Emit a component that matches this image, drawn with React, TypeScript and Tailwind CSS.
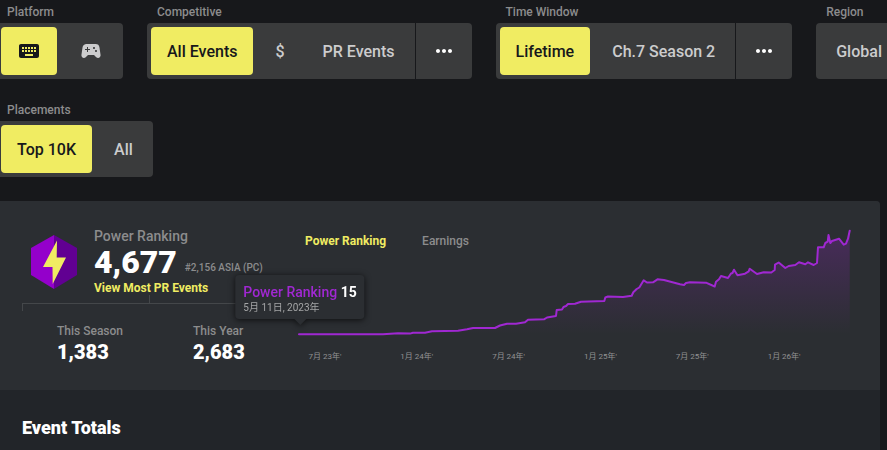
import { useState } from "react";
import type { ReactNode } from "react";
import { MdKeyboard, MdMoreHoriz, MdSportsEsports } from "react-icons/md";

interface Option {
  id: string;
  label: string;
  icon?: ReactNode;
}

const PLATFORMS: Option[] = [
  { id: "kbm", label: "Keyboard", icon: <MdKeyboard size={24} /> },
  { id: "pad", label: "Controller", icon: <MdSportsEsports size={24} /> },
];

const COMPETITIVE: Option[] = [
  { id: "all", label: "All Events" },
  { id: "cash", label: "$" },
  { id: "pr", label: "PR Events" },
];

const WINDOWS: Option[] = [
  { id: "lifetime", label: "Lifetime" },
  { id: "c7s2", label: "Ch.7 Season 2" },
];

const REGIONS: Option[] = [{ id: "global", label: "Global" }];

const PLACEMENTS: Option[] = [
  { id: "10k", label: "Top 10K" },
  { id: "all", label: "All" },
];

const MONTHS = ["7月 23年'", "1月 24年'", "7月 24年'", "1月 25年'", "7月 25年'", "1月 26年'"];

// x,y pairs of the ranking history, in viewBox units
const HISTORY =
  "299,334.3 383,334.3 398,333.2 410,333.6 413,332.8 425,332.8 432,331.3 458,330.8 467,329.3 473,328 495,328 " +
  "500,325.5 507,323.7 516,323.7 525,322.3 528,319.7 544,319.3 547,317.5 556,316 556.7,310 562,309.5 563.5,307 " +
  "566,306 568,304 575,303.7 581,301.7 604.3,301 605.3,297.5 608,296.5 623,297 631.7,295.7 633.3,292.3 636.7,289 " +
  "639.3,287.5 643.7,280.3 647,282.5 653,282.3 657.5,279.3 664,280 680,284.3 684,285 686,283 690,282.3 706,282.7 " +
  "714.7,286.5 716,281.7 719,279.3 721,276 728,278 731,273.5 732.5,273 734,269.7 737.5,275.3 745,273.7 748.7,271.3 " +
  "749.7,268.7 757,274 763.7,272.3 771.3,272.5 774.7,270 775,264.7 778.7,262.5 785.3,268 788.7,266 795.3,265 " +
  "799,262.3 805.3,264.3 808,262.3 813.7,265 817,263 818,247.3 823.7,247.3 825.3,243 827.7,241.7 828.5,235 " +
  "830.3,243 832,241 839,238.7 843.7,244.7 846,243.7 848,238.7 849.7,230.7";

function FilterGroup({
  label,
  options,
  initial,
  more = false,
}: {
  label: string;
  options: Option[];
  initial?: string;
  more?: boolean;
}) {
  const [value, setValue] = useState(initial);

  return (
    <div role="group" aria-label={label} className="shrink-0">
      <div className="px-2.5 pb-1 text-xs leading-[14px] font-medium text-[#8c8c8d]">{label}</div>
      <div className="flex h-14 overflow-hidden rounded bg-[#3a3b3c]">
        <div className="flex gap-1.5 p-1">
          {options.map((o) => {
            const active = o.id === value;
            return (
              <button
                key={o.id}
                type="button"
                aria-pressed={active}
                aria-label={o.icon ? o.label : undefined}
                onClick={() => setValue(o.id)}
                className={`cursor-pointer whitespace-nowrap rounded px-4 text-base font-medium ${
                  active ? "bg-[#f0ec62] text-[#17181b]" : "text-[#cccccd]"
                }`}
              >
                {o.icon ?? <span className="block pt-0.5">{o.label}</span>}
              </button>
            );
          })}
        </div>
        {more && (
          <button
            type="button"
            aria-label={`More ${label} options`}
            className="flex w-[57px] cursor-pointer items-center justify-center border-l border-[#17181b] text-white"
          >
            <MdMoreHoriz size={24} />
          </button>
        )}
      </div>
    </div>
  );
}

function RankBadge() {
  return (
    <svg width="46" height="54" viewBox="0 0 46 54" aria-hidden="true">
      <path d="M23 0L0 13v27l23 14z" fill="#9400cb" />
      <path d="M23 0l23 13v27L23 54z" fill="#610092" />
      <path d="M26 5.500L12 32h9.500L21.700 49 35 22.500h-9.300z" fill="#f0ec62" />
    </svg>
  );
}

function Stat({ label, value }: { label: string; value: string }) {
  return (
    <div>
      <div className="text-xs leading-4 font-medium text-[#8c8c8d]">{label}</div>
      <div className="text-xl leading-[26px] font-black text-white">{value}</div>
    </div>
  );
}

function Summary() {
  return (
    <div className="w-[254px] shrink-0">
      <div className="flex items-center gap-[17px] pl-[9px]">
        <RankBadge />
        <div className="whitespace-nowrap">
          <div className="text-sm leading-4 font-medium text-[#8c8c8d]">Power Ranking</div>
          <div className="flex items-end gap-2">
            <span className="text-[32px] leading-[37px] font-black text-white">4,677</span>
            <span className="text-[10px] leading-[26px] font-medium text-[#8c8c8d]">#2,156 ASIA (PC)</span>
          </div>
          <a href="#events" className="block text-xs leading-[14px] font-bold text-[#f0ec62]">
            View Most PR Events
          </a>
        </div>
      </div>
      <div className="mx-auto h-2 w-px bg-[#44474a]" />
      <div className="h-2 border-x border-t border-[#44474a]" />
      <div className="flex gap-[70px] pt-3 pl-[35px]">
        <Stat label="This Season" value="1,383" />
        <Stat label="This Year" value="2,683" />
      </div>
    </div>
  );
}

function HistoryChart() {
  const [tab, setTab] = useState("Power Ranking");

  return (
    <div className="relative min-w-0 flex-1">
      <svg
        className="block h-[108px] w-full overflow-visible"
        viewBox="299 228 551 108"
        preserveAspectRatio="none"
        role="img"
        aria-label="Power ranking history"
      >
        <defs>
          <linearGradient id="fill" x1="0" y1="0" x2="0" y2="1">
            <stop offset="0" stopColor="#9d24cf" stopOpacity="0.26" />
            <stop offset="1" stopColor="#9d24cf" stopOpacity="0" />
          </linearGradient>
        </defs>
        <polygon points={`${HISTORY} 849.7,334.3`} fill="url(#fill)" />
        <polyline
          points={HISTORY}
          fill="none"
          stroke="#a028d2"
          strokeWidth="2"
          strokeLinejoin="round"
          strokeLinecap="round"
          vectorEffect="non-scaling-stroke"
        />
      </svg>

      <div className="absolute top-1 left-1.5 flex gap-9 text-xs leading-[18px]">
        {["Power Ranking", "Earnings"].map((name) => (
          <button
            key={name}
            type="button"
            onClick={() => setTab(name)}
            className={`cursor-pointer ${tab === name ? "font-bold text-[#f0ec62]" : "font-medium text-[#8c8c8d]"}`}
          >
            {name}
          </button>
        ))}
      </div>

      <div className="absolute top-[47px] left-px -translate-x-1/2 whitespace-nowrap rounded bg-[#2b2e32] px-2 pt-2 pb-1 drop-shadow-[0_1px_3px_rgba(0,0,0,0.7)]">
        <div className="text-sm leading-[18px] font-bold text-white">
          <span className="font-medium text-[#a028d2]">Power Ranking</span> 15
        </div>
        <div className="text-[10px] leading-[14px] text-[#a4a5a6]">5月 11日, 2023年</div>
        <div className="absolute top-full left-1/2 -translate-x-1/2 border-x-6 border-t-6 border-x-transparent border-t-[#2b2e32]" />
      </div>

      <div className="mt-[13px] mr-5 -ml-5 grid grid-cols-6 text-center text-[8px] leading-4 text-[#929293]">
        {MONTHS.map((m) => (
          <span key={m}>{m}</span>
        ))}
      </div>
    </div>
  );
}

export default function App() {
  return (
    <div className="min-h-screen overflow-hidden bg-[#17181b] pt-[5px] font-['Roboto','Noto_Sans_CJK_JP',sans-serif]">
      <div className="-ml-[3px] flex flex-col gap-6">
        <div className="flex gap-6">
          <FilterGroup label="Platform" options={PLATFORMS} initial="kbm" />
          <FilterGroup label="Competitive" options={COMPETITIVE} initial="all" more />
          <FilterGroup label="Time Window" options={WINDOWS} initial="lifetime" more />
          <FilterGroup label="Region" options={REGIONS} />
        </div>
        <div className="flex gap-6">
          <FilterGroup label="Placements" options={PLACEMENTS} initial="10k" />
        </div>
      </div>

      <main className="mt-6 mr-[7px] overflow-hidden rounded-tr bg-[#222529]">
        <section className="flex gap-[23px] bg-[#2b2e32] pt-[27px] pr-[30px] pb-[25px] pl-[22px]">
          <Summary />
          <HistoryChart />
        </section>
        <section className="px-[22px] py-6">
          <h2 className="text-lg leading-7 font-black text-white">Event Totals</h2>
        </section>
      </main>
    </div>
  );
}
